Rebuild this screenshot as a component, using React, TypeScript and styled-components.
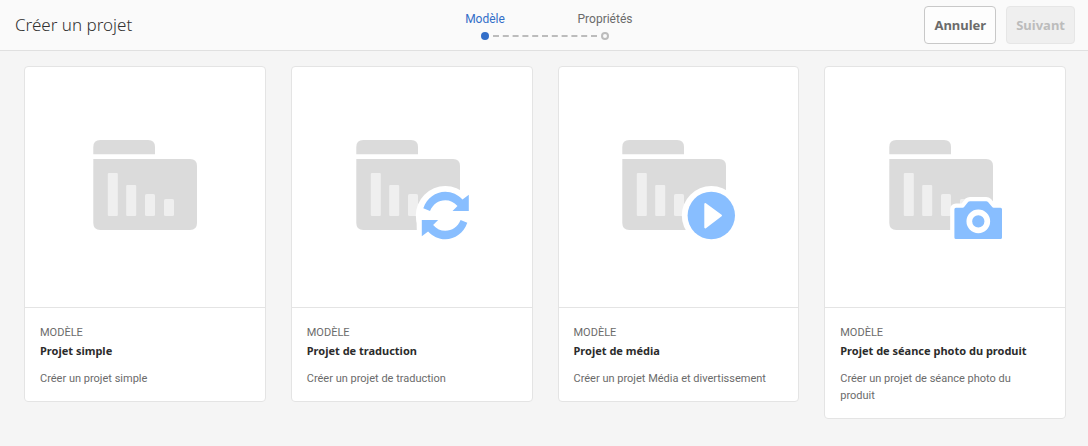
import React from 'react';
import styled, { createGlobalStyle } from 'styled-components';

const textFont = "Roboto, 'Noto Sans', sans-serif";
const headingFont = "'Noto Sans', 'Open Sans', sans-serif";

const GlobalStyle = createGlobalStyle`
  *, *::before, *::after { box-sizing: border-box; }
  body {
    margin: 0;
    background: #f5f5f5;
    color: #6b6b6b;
    font-family: ${textFont};
    font-size: 11px;
    line-height: 17px;
  }
  h1, h2, p, ol { margin: 0; padding: 0; }
`;

const Header = styled.header`
  display: grid;
  grid-template-columns: 1fr auto 1fr;
  align-items: center;
  padding: 0 13px 0 15px;
  background: #fafafa;
  border-bottom: 1px solid #e0e0e0;
`;

const PageTitle = styled.h1`
  color: #323232;
  font: 300 17px/24px ${headingFont};
`;

const Steps = styled.ol`
  display: flex;
  list-style: none;
  align-self: start;
  padding-top: 11px;
`;

const Step = styled.li<{ $active?: boolean }>`
  display: grid;
  justify-items: center;
  row-gap: 4px;
  width: 120px;
  font-size: 12px;
  line-height: 17px;
  color: ${(p) => (p.$active ? '#326ec8' : '#6b6b6b')};
`;

const StepTrack = styled.svg`
  display: block;
  width: 120px;
  height: 8px;
  overflow: visible;
`;

const Actions = styled.div`
  display: flex;
  justify-content: flex-end;
  gap: 10px;
  padding: 6px 0;
`;

const Button = styled.button`
  height: 38px;
  padding: 0 9px;
  border: 1px solid #c8c8c8;
  border-radius: 4px;
  background: #fdfdfd;
  color: #6b6b6b;
  font: 700 13px/18px ${headingFont};

  &:disabled {
    border-color: #e6e6e6;
    background: #efefef;
    color: #bcbcbc;
  }
`;

const CardGrid = styled.main`
  display: grid;
  grid-template-columns: repeat(4, minmax(0, 1fr));
  align-items: start;
  gap: 25px;
  padding: 15px 22px 27px 24px;
`;

const Card = styled.article`
  background: #fff;
  border: 1px solid #e4e4e4;
  border-radius: 4px;
`;

const Preview = styled.div`
  display: flex;
  align-items: center;
  justify-content: center;
  height: 241px;
  border-bottom: 1px solid #e4e4e4;
`;

const Artwork = styled.svg`
  flex: none;
  overflow: visible;
`;

const CardBody = styled.div`
  padding: 16px 15px 14px;
`;

const CardKind = styled.p`
  text-transform: uppercase;
`;

const CardTitle = styled.h2`
  color: #2c2c2c;
  font: 700 11px/20px ${headingFont};
`;

const CardText = styled.p`
  padding: 9px 12px 0 0;
`;

type Badge = 'refresh' | 'play' | 'camera';

const refreshArrow = 'M67.3 75.3C71 65 79.500 58.800 89.300 58.800C96 58.800 102 61.800 106.500 66.600L112.800 61.800V78H96.500L101.500 73C98 69 94 67.200 89.300 67.200C82.500 67.200 77 71 74 78Z';
const cameraBody = 'M67 74.800H73.600Q74.600 74.800 75.300 73.800L79.300 68.800Q80 68.200 81 68.200H97.200Q98.200 68.200 99 69L103 73.800Q103.700 74.800 104.700 74.800H111.500Q113 74.800 113 76.300V104.500Q113 106 111.500 106H67Q65.400 106 65.400 104.500V76.300Q65.400 74.800 67 74.800Z';

const RefreshBadge = () => (
  <g>
    <circle cx="89.300" cy="82.500" r="29.500" fill="#fff" />
    <path d="M60.500 84H80V107H61Z" fill="#fff" />
    <g fill="#88beff">
      <path d={refreshArrow} />
      <path d={refreshArrow} transform="rotate(180 89.300 82.500)" />
    </g>
  </g>
);

const PlayBadge = () => (
  <g>
    <circle cx="89.300" cy="82.500" r="29.500" fill="#fff" />
    <circle cx="89.300" cy="82.500" r="23.700" fill="#88beff" />
    <path d="M83.300 71L99 82.500L83.300 94.500Z" fill="#fff" stroke="#fff" strokeWidth="2" strokeLinejoin="round" />
  </g>
);

const CameraBadge = () => (
  <g>
    <path d={cameraBody} fill="#fff" stroke="#fff" strokeWidth="8.500" strokeLinejoin="round" />
    <path d={cameraBody} fill="#88beff" />
    <circle cx="89.300" cy="88.300" r="9" fill="none" stroke="#fff" strokeWidth="5.700" />
  </g>
);

const badges: Record<Badge, React.FC> = {
  refresh: RefreshBadge,
  play: PlayBadge,
  camera: CameraBadge,
};

const FolderArt = ({ badge }: { badge?: Badge }) => {
  const BadgeArt = badge && badges[badge];
  const width = badge ? 112 : 104;
  return (
    <Artwork width={width} height="108" viewBox={`0 0 ${width} 108`} aria-hidden="true">
      <path d="M0.300 21.300V14Q0.300 7 7.300 7H55Q62 7 62 14V21.300Z" fill="#dbdbdb" />
      <path d="M0.300 26H97Q104 26 104 33V90Q104 97 97 97H7.300Q0.300 97 0.300 90Z" fill="#dbdbdb" />
      <g fill="#efefef">
        <rect x="14.800" y="40" width="10" height="43" rx="1" />
        <rect x="33.200" y="52" width="10" height="31" rx="1" />
        <rect x="52" y="61" width="10" height="22" rx="1.500" />
        <rect x="71" y="66" width="10" height="17" rx="1.500" />
      </g>
      {BadgeArt && <BadgeArt />}
    </Artwork>
  );
};

const templates: { title: string; text: string; badge?: Badge }[] = [
  { title: 'Projet simple', text: 'Créer un projet simple' },
  { title: 'Projet de traduction', text: 'Créer un projet de traduction', badge: 'refresh' },
  { title: 'Projet de média', text: 'Créer un projet Média et divertissement', badge: 'play' },
  {
    title: 'Projet de séance photo du produit',
    text: 'Créer un projet de séance photo du produit',
    badge: 'camera',
  },
];

export default function App() {
  return (
    <>
      <GlobalStyle />
      <Header>
        <PageTitle>Créer un projet</PageTitle>
        <Steps>
          <Step $active aria-current="step">
            Modèle
            <StepTrack viewBox="0 0 120 8" aria-hidden="true">
              <circle cx="60" cy="4" r="4" fill="#326ec8" />
              <path d="M68 4H172" stroke="#bcbcbc" strokeWidth="2" strokeDasharray="6 3.800" />
            </StepTrack>
          </Step>
          <Step>
            Propriétés
            <StepTrack viewBox="0 0 120 8" aria-hidden="true">
              <circle cx="60" cy="4" r="3" fill="#fafafa" stroke="#bcbcbc" strokeWidth="2" />
            </StepTrack>
          </Step>
        </Steps>
        <Actions>
          <Button type="button">Annuler</Button>
          <Button type="button" disabled>Suivant</Button>
        </Actions>
      </Header>
      <CardGrid>
        {templates.map((t) => (
          <Card key={t.title}>
            <Preview>
              <FolderArt badge={t.badge} />
            </Preview>
            <CardBody>
              <CardKind>Modèle</CardKind>
              <CardTitle>{t.title}</CardTitle>
              <CardText>{t.text}</CardText>
            </CardBody>
          </Card>
        ))}
      </CardGrid>
    </>
  );
}
